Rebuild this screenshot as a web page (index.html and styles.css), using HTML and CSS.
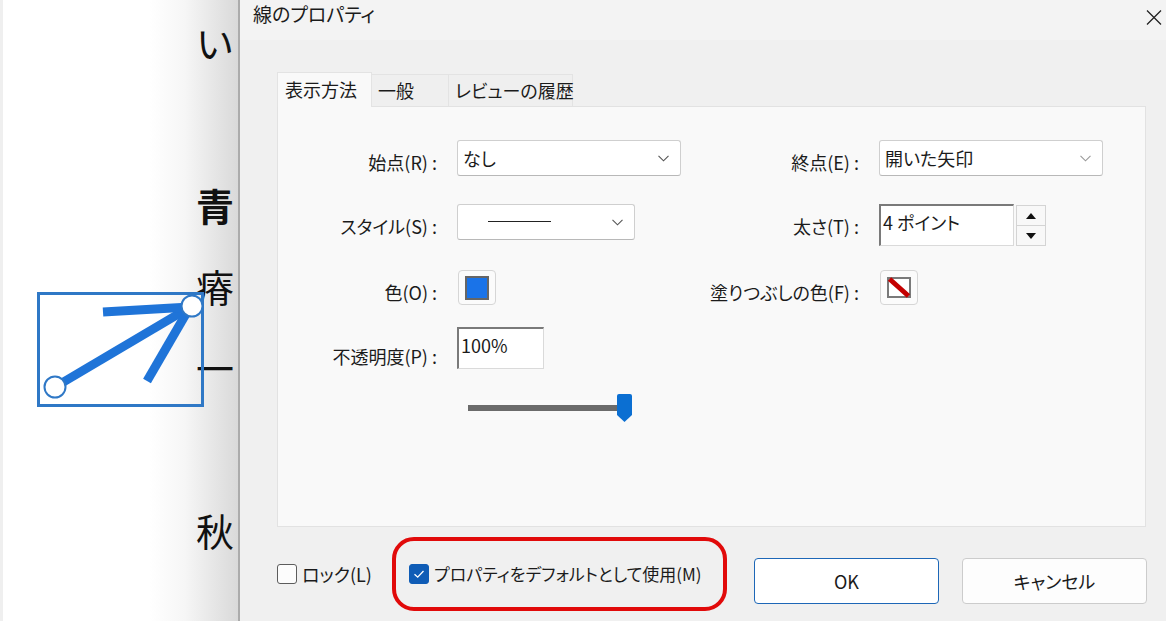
FILE: index.html
```html
<!DOCTYPE html>
<html lang="ja">
<head>
<meta charset="utf-8">
<title>線のプロパティ</title>
<link rel="stylesheet" href="styles.css">
</head>
<body>
<div class="screen">
  <div class="doc">
    <div class="doc-text">
      <div class="doc-line">い</div>
      <div class="doc-line gap-l strong">青</div>
      <div class="doc-line gap-s">瘠</div>
      <div class="doc-line gap-s">一</div>
      <div class="doc-line gap-l">秋</div>
    </div>
    <svg class="shape" width="238" height="621" viewBox="0 0 238 621">
      <rect x="38.5" y="293.5" width="164" height="112" fill="none" stroke="#2f78c6" stroke-width="3"/>
      <line x1="55" y1="387" x2="192" y2="306" stroke="#1f74d8" stroke-width="9"/>
      <line x1="103" y1="312" x2="190" y2="307" stroke="#1f74d8" stroke-width="9"/>
      <line x1="147" y1="381" x2="190" y2="307" stroke="#1f74d8" stroke-width="9"/>
      <circle cx="55" cy="387" r="10.5" fill="#fff" stroke="#2f78c6" stroke-width="2"/>
      <circle cx="192" cy="306" r="10.5" fill="#fff" stroke="#2f78c6" stroke-width="2"/>
    </svg>
  </div>

  <div class="dialog">
    <div class="titlebar">
      <span class="title">線のプロパティ</span>
      <svg class="close" width="16" height="15" viewBox="0 0 16 15"><path d="M1 0.5 L15 14.5 M15 0.5 L1 14.5" stroke="#222" stroke-width="1.3" fill="none"/></svg>
    </div>

    <div class="dialog-body">
      <div class="tabs">
        <div class="tab tab-active">表示方法</div>
        <div class="tab tab-general">一般</div>
        <div class="tab tab-review">レビューの履歴</div>
      </div>
      <div class="panel">
        <div class="form">
          <div class="label">始点(R) :</div>
          <div class="select">
            <span>なし</span>
            <svg class="chev" width="11" height="7" viewBox="0 0 11 7"><path d="M0.5 0.8 L5.5 5.8 L10.5 0.8" fill="none" stroke="#555" stroke-width="1.1"/></svg>
          </div>
          <div class="label">終点(E) :</div>
          <div class="select">
            <span>開いた矢印</span>
            <svg class="chev" width="11" height="7" viewBox="0 0 11 7"><path d="M0.5 0.8 L5.5 5.8 L10.5 0.8" fill="none" stroke="#999" stroke-width="1.1"/></svg>
          </div>

          <div class="label">スタイル(S) :</div>
          <div class="select select-style">
            <span class="line-sample"></span>
            <svg class="chev" width="11" height="7" viewBox="0 0 11 7"><path d="M0.5 0.8 L5.5 5.8 L10.5 0.8" fill="none" stroke="#555" stroke-width="1.1"/></svg>
          </div>
          <div class="label">太さ(T) :</div>
          <div class="spin-group">
            <div class="field field-weight">4 ポイント</div>
            <div class="spin">
              <div class="spin-btn"><span class="tri-up"></span></div>
              <div class="spin-btn"><span class="tri-down"></span></div>
            </div>
          </div>

          <div class="label">色(O) :</div>
          <div class="swatch-btn"><span class="swatch"></span></div>
          <div class="label">塗りつぶしの色(F) :</div>
          <div class="swatch-btn">
            <svg width="24" height="21" viewBox="0 0 24 21">
              <rect x="1" y="1" width="22" height="19" fill="#fff" stroke="#7a7a7a" stroke-width="2"/>
              <line x1="2.5" y1="2" x2="21.5" y2="19" stroke="#c40000" stroke-width="5"/>
            </svg>
          </div>

          <div class="label label-low">不透明度(P) :</div>
          <div class="field field-opacity">100%</div>

          <div class="slider">
            <span class="track"></span>
            <svg class="thumb" width="15" height="28" viewBox="0 0 15 28"><path d="M2 0 H13 Q15 0 15 2 V21 L7.5 28 L0 21 V2 Q0 0 2 0 Z" fill="#0b6fd2"/></svg>
          </div>
        </div>
      </div>
    </div>

    <div class="footer">
      <div class="check-item lock">
        <span class="box"></span>
        <span>ロック(L)</span>
      </div>
      <div class="highlight">
        <div class="check-item">
          <span class="box box-checked">
            <svg width="18" height="18" viewBox="0 0 18 18"><path d="M4.5 9.2 L7.7 12.2 L13.5 6" fill="none" stroke="#fff" stroke-width="1.3"/></svg>
          </span>
          <span>プロパティをデフォルトとして使用(M)</span>
        </div>
      </div>
      <button class="btn btn-primary">OK</button>
      <button class="btn">キャンセル</button>
    </div>
  </div>
</div>
</body>
</html>
```

FILE: styles.css
```css
* { box-sizing: border-box; }

html, body {
  margin: 0;
  height: 100%;
}

body {
  font-family: "Noto Sans CJK JP", sans-serif;
  color: #1b1b1b;
  font-feature-settings: "palt";
  overflow: hidden;
  background: #fff;
}

.screen {
  display: flex;
  width: 1166px;
  height: 621px;
}

/* ---------- document behind the dialog ---------- */
.doc {
  position: relative;
  width: 238px;
  flex: none;
  overflow: hidden;
  background: linear-gradient(90deg, #efefef 0, #efefef 3px, #fff 3px, #fff 150px, #f6f6f6 185px, #d9d9d9 238px);
}

.doc-text {
  padding: 22px 0 0 196px;
  font-feature-settings: normal;
}

.doc-line {
  height: 40px;
  line-height: 40px;
  font-size: 38px;
  white-space: nowrap;
  color: #111;
}

.gap-l { margin-top: 123px; }
.gap-s { margin-top: 41px; }
.strong { font-weight: 700; }

.shape {
  position: absolute;
  left: 0;
  top: 0;
}

/* ---------- dialog ---------- */
.dialog {
  flex: 1;
  min-width: 0;
  display: flex;
  flex-direction: column;
  border-left: 2px solid #ababab;
  background: #f0f0f0;
}

.titlebar {
  height: 40px;
  flex: none;
  display: flex;
  justify-content: space-between;
  align-items: flex-start;
  padding: 2px 4px 0 13px;
  background: #f3f3f3;
}

.title {
  font-size: 19px;
  line-height: 24px;
}

.close { margin-top: 8px; }

.dialog-body {
  padding: 32px 20px 0 37px;
}

.tabs {
  display: flex;
  align-items: flex-end;
  height: 34px;
}

.tab {
  height: 32px;
  line-height: 30px;
  font-size: 18px;
  padding: 0 6px;
  background: #efefef;
  border: 1px solid #e3e3e3;
  border-bottom: none;
  white-space: nowrap;
}

.tab-active {
  width: 95px;
  height: 35px;
  line-height: 32px;
  margin-bottom: -1px;
  padding: 0 7px;
  background: #f9f9f9;
  position: relative;
  z-index: 1;
}

.tab-general { width: 77px; border-left: none; }
.tab-review { width: 124px; border-left: none; }

.panel {
  height: 421px;
  border: 1px solid #e2e2e2;
  background: #f9f9f9;
}

.form {
  display: grid;
  grid-template-columns: 159px 224px 158px 1fr;
  grid-template-rows: 64px 66px 57px 67px 40px;
  column-gap: 20px;
  padding-top: 33px;
  align-items: start;
}

.label {
  text-align: right;
  font-size: 18px;
  line-height: 24px;
  padding-top: 10px;
  white-space: nowrap;
}

.label-low { padding-top: 17px; }

.select {
  width: 224px;
  height: 36px;
  background: #fff;
  border: 1px solid #cfcfcf;
  border-bottom-color: #b8b8b8;
  border-radius: 3px;
  display: flex;
  align-items: center;
  justify-content: space-between;
  padding: 0 11px 0 5px;
  font-size: 18px;
  line-height: 24px;
}

.select-style {
  width: 178px;
  padding-left: 30px;
}

.line-sample {
  width: 63px;
  height: 1px;
  background: #222;
  margin-top: -1px;
}

.spin-group {
  display: flex;
  gap: 2px;
}

.field {
  height: 42px;
  background: #fff;
  border: 1px solid #dadada;
  border-top: 2px solid #7a7a7a;
  border-left: 2px solid #7a7a7a;
  padding: 4px 0 0 2px;
  font-size: 18px;
  line-height: 24px;
  white-space: nowrap;
}

.field-weight { width: 135px; }
.field-opacity { width: 87px; }

.spin {
  width: 30px;
  height: 41px;
  margin-top: 1px;
  display: flex;
  flex-direction: column;
  border: 1px solid #d4d4d4;
  background: #f8f8f8;
}

.spin-btn {
  flex: 1;
  display: flex;
  align-items: center;
  justify-content: center;
}

.spin-btn + .spin-btn { border-top: 1px solid #d4d4d4; }

.tri-up {
  width: 0;
  height: 0;
  border-left: 5px solid transparent;
  border-right: 5px solid transparent;
  border-bottom: 6px solid #111;
}

.tri-down {
  width: 0;
  height: 0;
  border-left: 5px solid transparent;
  border-right: 5px solid transparent;
  border-top: 6px solid #111;
}

.swatch-btn {
  width: 38px;
  height: 35px;
  margin-left: 1px;
  border: 1px solid #d6d6d6;
  border-radius: 4px;
  background: #fbfbfb;
  display: flex;
  align-items: center;
  justify-content: center;
}

.swatch {
  width: 24px;
  height: 24px;
  border: 2px solid #666;
  background: #1a73e8;
}

.slider {
  grid-column: 2;
  display: flex;
  align-items: center;
  height: 28px;
  padding-left: 11px;
}

.track {
  width: 149px;
  height: 6px;
  background: #6b6b6b;
}

/* ---------- footer ---------- */
.footer {
  height: 94px;
  flex: none;
  display: flex;
  align-items: center;
  padding: 0 19px 0 37px;
}

.check-item {
  display: flex;
  align-items: center;
  gap: 5px;
  font-size: 18px;
  line-height: 24px;
  white-space: nowrap;
}

.lock { width: 115px; }

.highlight .check-item { font-size: 17px; }

.box {
  width: 20px;
  height: 20px;
  flex: none;
  border: 1px solid #5c5c5c;
  border-radius: 3px;
  background: #fcfcfc;
  display: flex;
  align-items: center;
  justify-content: center;
}

.box-checked {
  background: #0f5cb6;
  border-color: #0f5cb6;
}

.highlight {
  width: 335px;
  height: 74px;
  border: 4px solid #e10a0a;
  border-radius: 22px;
  padding-left: 13px;
  display: flex;
  align-items: center;
}

.btn {
  width: 185px;
  height: 46px;
  margin-top: 14px;
  border: 1px solid #cccccc;
  border-radius: 4px;
  background: #fdfdfd;
  font: inherit;
  font-size: 18px;
  color: #1b1b1b;
  padding: 0;
  display: flex;
  align-items: center;
  justify-content: center;
}

.btn-primary {
  margin-left: auto;
  border-color: #1d67b7;
  background: #fff;
}

.btn + .btn { margin-left: 23px; }
```
